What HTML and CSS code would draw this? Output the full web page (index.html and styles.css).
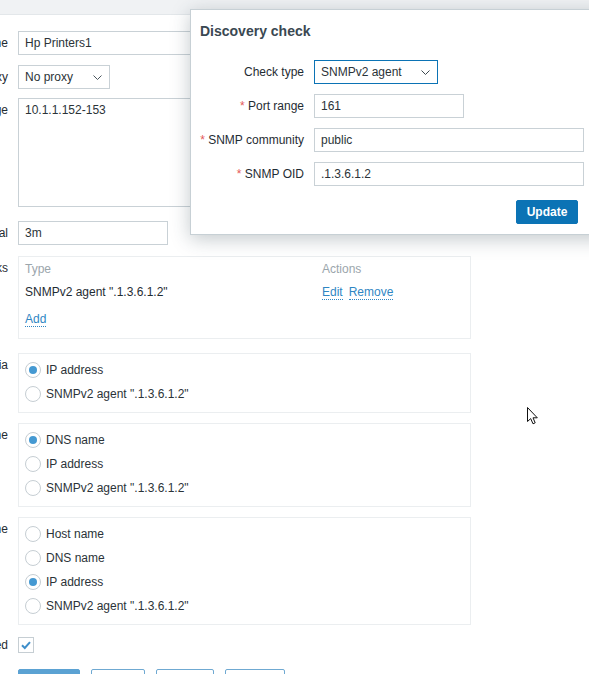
FILE: index.html
```html
<!DOCTYPE html>
<html>
<head>
<meta charset="utf-8">
<link rel="stylesheet" href="styles.css">
</head>
<body>
<div class="topbar"></div>
<main class="form">
  <div class="row">
    <div class="lbl">Name</div>
    <div class="fld"><div class="input w453">Hp Printers1</div></div>
  </div>
  <div class="row g10">
    <div class="lbl">Discovery by proxy</div>
    <div class="fld"><div class="input select w92">No proxy<svg class="chev" width="9" height="5" viewBox="0 0 9 5"><path d="M0.5 0.5 L4.5 4.5 L8.5 0.5" fill="none" stroke="#4b565d" stroke-width="1"/></svg></div></div>
  </div>
  <div class="row g9">
    <div class="lbl">IP range</div>
    <div class="fld"><div class="input textarea w453">10.1.1.152-153</div></div>
  </div>
  <div class="row g14">
    <div class="lbl">Update interval</div>
    <div class="fld"><div class="input w150">3m</div></div>
  </div>
  <div class="row g11">
    <div class="lbl">Checks</div>
    <div class="fld">
      <div class="box checks">
        <div class="trow head"><span class="c-type">Type</span><span>Actions</span></div>
        <div class="trow data"><span class="c-type">SNMPv2 agent ".1.3.6.1.2"</span><span><a class="link">Edit</a><a class="link">Remove</a></span></div>
        <div class="trow add"><a class="link">Add</a></div>
      </div>
    </div>
  </div>
  <div class="row g14">
    <div class="lbl">Device uniqueness criteria</div>
    <div class="fld">
      <div class="box radios">
        <div class="radio"><span class="dot on"></span>IP address</div>
        <div class="radio"><span class="dot"></span>SNMPv2 agent ".1.3.6.1.2"</div>
      </div>
    </div>
  </div>
  <div class="row g10">
    <div class="lbl">Host name</div>
    <div class="fld">
      <div class="box radios">
        <div class="radio"><span class="dot on"></span>DNS name</div>
        <div class="radio"><span class="dot"></span>IP address</div>
        <div class="radio"><span class="dot"></span>SNMPv2 agent ".1.3.6.1.2"</div>
      </div>
    </div>
  </div>
  <div class="row g10">
    <div class="lbl">Visible name</div>
    <div class="fld">
      <div class="box radios">
        <div class="radio"><span class="dot"></span>Host name</div>
        <div class="radio"><span class="dot"></span>DNS name</div>
        <div class="radio"><span class="dot on"></span>IP address</div>
        <div class="radio"><span class="dot"></span>SNMPv2 agent ".1.3.6.1.2"</div>
      </div>
    </div>
  </div>
  <div class="row g8">
    <div class="lbl">Enabled</div>
    <div class="fld chkwrap"><span class="chk"><svg width="14" height="14" viewBox="0 0 14 14"><path d="M3 7.2 L5.8 10 L11 4.2" fill="none" stroke="#3f8fca" stroke-width="2"/></svg></span></div>
  </div>
  <div class="row g12">
    <div class="lbl"></div>
    <div class="fld buttons">
      <button class="btn main">Update</button>
      <button class="btn alt w54">Clone</button>
      <button class="btn alt w58">Delete</button>
      <button class="btn alt w60">Cancel</button>
    </div>
  </div>
</main>

<section class="dialog">
  <h2 class="dtitle">Discovery check</h2>
  <div class="drow first">
    <div class="dlbl">Check type</div>
    <div class="input select focus w124">SNMPv2 agent<svg class="chev" width="9" height="5" viewBox="0 0 9 5"><path d="M0.5 0.5 L4.5 4.5 L8.5 0.5" fill="none" stroke="#3c474e" stroke-width="1"/></svg></div>
  </div>
  <div class="drow">
    <div class="dlbl"><span class="req">*</span> Port range</div>
    <div class="input w150">161</div>
  </div>
  <div class="drow">
    <div class="dlbl"><span class="req">*</span> SNMP community</div>
    <div class="input w270">public</div>
  </div>
  <div class="drow">
    <div class="dlbl"><span class="req">*</span> SNMP OID</div>
    <div class="input w270">.1.3.6.1.2</div>
  </div>
  <div class="dfoot"><button class="btn primary">Update</button></div>
</section>

<svg class="cursor" width="14" height="20" viewBox="0 0 14 20"><path d="M1.5 1.5 L1.5 15.5 L4.7 12.6 L7 17.8 L9.2 16.8 L7 11.8 L11.3 11.8 Z" fill="#fff" stroke="#111" stroke-width="1" stroke-linejoin="miter"/></svg>
</body>
</html>
```

FILE: styles.css
```css
html, body {
  margin: 0;
  padding: 0;
  background: #ffffff;
  overflow: hidden;
}
body {
  width: 589px;
  height: 674px;
  position: relative;
  font-family: Arial, "Liberation Sans", sans-serif;
  font-size: 12px;
  color: #1f2c33;
}
.topbar {
  height: 14px;
  background: #f0f2f4;
  border-bottom: 1px solid #e3e7ea;
}
.form {
  margin-left: -182px;
  padding-top: 16px;
}
.row {
  display: grid;
  grid-template-columns: 200px auto;
}
.g8 { margin-top: 8px; }
.g9 { margin-top: 9px; }
.g10 { margin-top: 10px; }
.g11 { margin-top: 11px; }
.g12 { margin-top: 12px; }
.g14 { margin-top: 14px; }
.lbl {
  text-align: right;
  padding-right: 10px;
  line-height: 24px;
  white-space: nowrap;
  overflow: hidden;
  color: #1f2c33;
}
.fld {
  display: flex;
  align-items: flex-start;
}
.input {
  box-sizing: border-box;
  height: 24px;
  border: 1px solid #c9d1d6;
  background: #fff;
  padding: 0 6px;
  line-height: 22px;
  color: #2b3338;
  white-space: nowrap;
  position: relative;
}
.select .chev {
  position: absolute;
  right: 7px;
  top: 9px;
}
.focus { border-color: #0b73b5; }
.textarea {
  height: 109px;
  line-height: 22px;
}
.w92 { width: 92px; }
.w124 { width: 124px; }
.w150 { width: 150px; }
.w270 { width: 270px; }
.w453 { width: 453px; }
.box {
  box-sizing: border-box;
  width: 453px;
  border: 1px solid #ebeef0;
  background: #fff;
}
.checks {
  height: 83px;
  padding: 3px 6px 0;
}
.trow {
  display: flex;
  align-items: center;
  line-height: 18px;
  height: 18px;
}
.trow.data { margin-top: 5px; }
.trow.add { margin-top: 8px; }
.c-type { width: 297px; }
.head { color: #9ba6ac; }
.link {
  color: #2f86c3;
  border-bottom: 1px dotted #2f86c3;
  line-height: 14px;
  display: inline-block;
  margin-right: 6px;
}
.trow.add .link { margin-top: 3px; }
.radios {
  padding: 4px 6px 6px;
}
.radio {
  height: 24px;
  display: flex;
  align-items: center;
  gap: 5px;
  color: #2b3338;
}
.dot {
  box-sizing: border-box;
  width: 16px;
  height: 16px;
  border-radius: 50%;
  border: 1px solid #c6ced3;
  background: #fff;
  display: inline-flex;
  align-items: center;
  justify-content: center;
}
.dot.on::after {
  content: "";
  width: 8px;
  height: 8px;
  border-radius: 50%;
  background: #4599d2;
}
.chkwrap {
  height: 24px;
  align-items: center;
}
.chk {
  box-sizing: border-box;
  width: 16px;
  height: 16px;
  border: 1px solid #c6ced3;
  display: inline-flex;
  align-items: center;
  justify-content: center;
}
.buttons {
  gap: 11px;
}
.btn {
  box-sizing: border-box;
  height: 24px;
  font-family: Arial, "Liberation Sans", sans-serif;
  font-size: 12px;
  border-radius: 2px;
  padding: 0;
}
.main {
  width: 62px;
  background: #5ba2d3;
  border: 1px solid #5ba2d3;
  color: #fff;
}
.alt {
  background: #fff;
  border: 1px solid #6fa9d2;
  color: #2f86c3;
}
.w54 { width: 54px; }
.w58 { width: 58px; }
.w60 { width: 60px; }

.dialog {
  position: absolute;
  left: 190px;
  top: 9px;
  width: 420px;
  box-sizing: border-box;
  background: #fff;
  border: 1px solid #c7d0d5;
  box-shadow: 0 4px 18px rgba(40, 60, 72, 0.28);
  padding: 0 9px 10px;
}
.dtitle {
  margin: 12px 0 0;
  font-size: 14px;
  line-height: 18px;
  font-weight: bold;
  color: #3a4852;
}
.drow {
  display: grid;
  grid-template-columns: 104px auto;
  column-gap: 10px;
  margin-top: 10px;
  justify-items: start;
}
.drow.first { margin-top: 20px; }
.dlbl {
  justify-self: end;
  line-height: 24px;
  white-space: nowrap;
  color: #1f2c33;
}
.req { color: #e45959; }
.dfoot {
  margin-top: 14px;
  padding-left: 316px;
  display: flex;
}
.primary {
  width: 62px;
  background: #0b73b5;
  border: 1px solid #0b73b5;
  color: #fff;
  font-weight: bold;
}
.cursor {
  position: absolute;
  left: 526px;
  top: 406px;
}
```
